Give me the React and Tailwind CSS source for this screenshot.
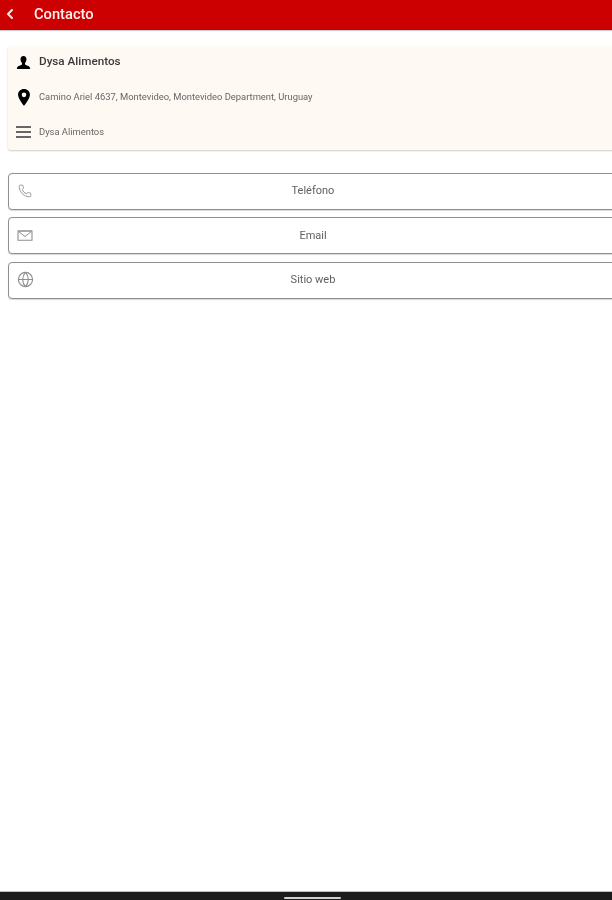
import React from "react";
import { ChevronLeft, Phone, Globe } from "lucide-react";

function MailIcon({ className }) {
  return (
    <svg viewBox="0 0 16 11" fill="none" stroke="currentColor" className={className}>
      <path strokeWidth="1.1" d="M1 1.5v8.8h14V1.5" />
      <path strokeWidth="1.5" d="M.6 1h14.8" />
      <path strokeWidth="1" d="M1.5 1.5 8 6.5l6.5-5" />
    </svg>
  );
}

function PhoneIcon({ className }) {
  return <Phone className={className} strokeWidth={1.5} />;
}

function GlobeIcon({ className }) {
  return <Globe className={className} strokeWidth={1.6} />;
}

const ACTIONS = [
  { label: "Teléfono", icon: PhoneIcon, iconClass: "left-[9px] top-[10px] h-[14px] w-[14px]" },
  { label: "Email", icon: MailIcon, iconClass: "left-[8px] top-[12px] h-[11px] w-[16px]" },
  { label: "Sitio web", icon: GlobeIcon, iconClass: "left-[8px] top-[8px] h-[17px] w-[17px]" },
];

function PersonIcon() {
  return (
    <svg viewBox="0 0 16 16" className="h-[15px] w-[15px] shrink-0 text-black" fill="currentColor">
      <path d="M8 1C5.9 1 4.8 2.6 4.8 4.6c0 1.6.7 3 1.6 3.8v1.1c0 .6-.5 1-1.4 1.3C3 11.5 1 12.2 1 14v1h14v-1c0-1.8-2-2.5-4-3.2-.9-.3-1.4-.7-1.4-1.3V8.4c.9-.8 1.6-2.2 1.6-3.8C11.2 2.6 10.1 1 8 1z" />
    </svg>
  );
}

function PinIcon() {
  return (
    <svg viewBox="0 0 16 20" className="h-[17px] w-[14px] shrink-0 text-black" fill="currentColor">
      <path fillRule="evenodd" d="M8 0C3.8 0 1 3 1 6.9 1 11.5 8 20 8 20s7-8.5 7-13.1C15 3 12.2 0 8 0zm0 9.6a2.7 2.7 0 1 1 0-5.4 2.7 2.7 0 0 1 0 5.4z" />
    </svg>
  );
}

function MenuIcon() {
  return (
    <div className="flex h-[12px] w-[15px] shrink-0 flex-col justify-between">
      <div className="h-[2px] bg-[#666]" />
      <div className="h-[2px] bg-[#666]" />
      <div className="h-[2px] bg-[#666]" />
    </div>
  );
}

function InfoRow({ icon, className, children }) {
  return (
    <div className="flex h-[35px] shrink-0 items-center gap-[8px] pl-[8px]">
      <div className="flex w-[15px] justify-center">{icon}</div>
      <span className={className}>{children}</span>
    </div>
  );
}

function ActionButton({ label, icon: Icon, iconClass }) {
  return (
    <div className="relative flex h-[37px] w-[610px] items-center justify-center rounded-[4px] border border-[#8f8f8f] bg-white shadow-[0_1px_1px_rgba(0,0,0,0.15)]">
      <Icon className={`absolute text-[#8f8f8f] ${iconClass}`} />
      <span className="text-[11px] text-[#5f5f5f]">{label}</span>
    </div>
  );
}

export default function App() {
  return (
    <div className="relative flex h-[900px] w-[612px] flex-col overflow-hidden bg-white font-['Roboto',sans-serif] blur-[0.4px]">
      <header className="flex h-[30px] shrink-0 items-center bg-[#cc0000] pb-[2px] pl-[2px] shadow-[0_1px_1px_rgba(0,0,0,0.2)]">
        <ChevronLeft className="h-[16px] w-[16px] text-[#fbe9e9]" strokeWidth={3} />
        <h1 className="ml-[16px] text-[14.7px] font-medium text-[#fdf0f0]">Contacto</h1>
      </header>

      <main className="flex flex-1 flex-col pl-[8px] pt-[16px]">
        <section className="flex h-[104px] w-[620px] flex-col justify-center rounded-[3px] bg-[#fff9f4] pb-[2px] shadow-[0_1px_2px_rgba(0,0,0,0.2)]">
          <InfoRow icon={<PersonIcon />} className="text-[11.7px] font-medium text-[#3a3a3a]">
            Dysa Alimentos
          </InfoRow>
          <InfoRow icon={<PinIcon />} className="text-[9.4px] text-[#666]">
            Camino Ariel 4637, Montevideo, Montevideo Department, Uruguay
          </InfoRow>
          <InfoRow icon={<MenuIcon />} className="text-[9.4px] text-[#666]">
            Dysa Alimentos
          </InfoRow>
        </section>

        <div className="mt-[23px] flex flex-col gap-[7.4px]">
          {ACTIONS.map((a) => (
            <ActionButton key={a.label} label={a.label} icon={a.icon} iconClass={a.iconClass} />
          ))}
        </div>
      </main>

      <footer className="flex h-[9px] shrink-0 items-end justify-center border-t border-[#bdbdbd] bg-[#1c1c1c] pb-[1px] pl-[13px]">
        <div className="h-[2px] w-[57px] rounded-full bg-[#d0d0d0]" />
      </footer>
    </div>
  );
}
